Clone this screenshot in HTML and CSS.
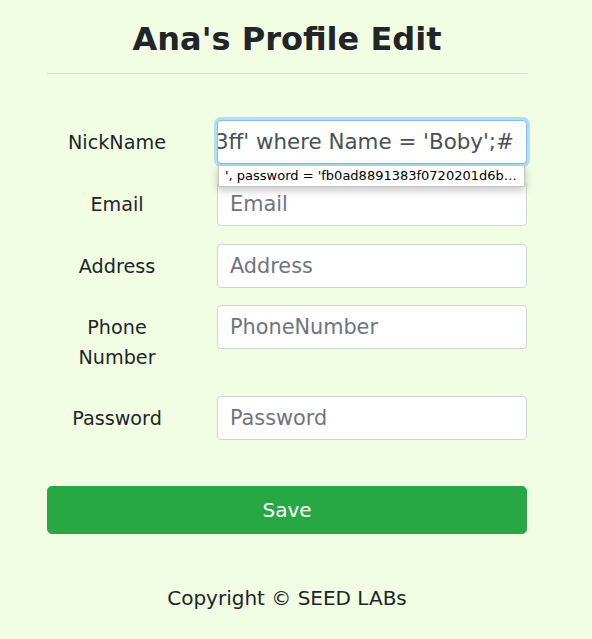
FILE: index.html
```html
<!DOCTYPE html>
<html lang="en">
<head>
<meta charset="utf-8">
<title>Ana's Profile Edit</title>
<link rel="stylesheet" href="styles.css">
</head>
<body>
<div class="container">
  <h2 class="title">Ana's Profile Edit</h2>
  <hr class="rule">
  <form class="form">
    <div class="row">
      <label class="label">NickName</label>
      <div class="field">
        <div class="input focused"><span class="value">3ff' where Name = 'Boby';#</span></div>
        <div class="suggest">', password = 'fb0ad8891383f0720201d6b4e0f8d3ff' where Name = 'Boby';#</div>
      </div>
    </div>
    <div class="row">
      <label class="label">Email</label>
      <div class="field"><div class="input"><span class="ph">Email</span></div></div>
    </div>
    <div class="row">
      <label class="label">Address</label>
      <div class="field"><div class="input"><span class="ph">Address</span></div></div>
    </div>
    <div class="row">
      <label class="label">Phone Number</label>
      <div class="field"><div class="input"><span class="ph">PhoneNumber</span></div></div>
    </div>
    <div class="row">
      <label class="label">Password</label>
      <div class="field"><div class="input"><span class="ph">Password</span></div></div>
    </div>
    <div class="save">Save</div>
  </form>
  <p class="footer">Copyright © SEED LABs</p>
</div>
</body>
</html>
```
FILE: styles.css
```css
html, body {
  margin: 0;
  padding: 0;
}
body {
  background: #f2fee4;
  font-family: "DejaVu Sans", sans-serif;
  color: #212529;
  padding-right: 18px;
}
.container {
  width: 480px;
  margin: 0 auto;
}
.title {
  margin: 0;
  padding-top: 20px;
  font-size: 32px;
  line-height: 38.4px;
  font-weight: bold;
  text-align: center;
  color: #212529;
}
.rule {
  margin: 15px 0 0 0;
  border: 0;
  border-top: 1px solid rgba(0, 0, 0, 0.1);
}
.form {
  margin-top: 46px;
}
.row {
  display: flex;
  gap: 30px;
  margin-bottom: 17.6px;
}
.label {
  width: 140px;
  flex: none;
  text-align: center;
  font-size: 19.2px;
  line-height: 30px;
  padding: 8px 0 5px;
}
.field {
  flex: 1;
  min-width: 0;
  position: relative;
}
.input {
  height: 44px;
  box-sizing: border-box;
  background: #fff;
  border: 1px solid #ced4da;
  border-radius: 4px;
  padding: 6px 12px;
  font-size: 20.8px;
  line-height: 30px;
  color: #495057;
  white-space: nowrap;
  overflow: hidden;
  display: flex;
  justify-content: flex-end;
}
.input .ph {
  color: #6c757d;
  margin-right: auto;
}
.focused {
  border-color: #80bdff;
  box-shadow: 0 0 0 3px rgba(0, 123, 255, 0.25);
}
.value {
  flex: none;
  font-size: 21.4px;
}
.suggest {
  position: absolute;
  left: 1px;
  right: 2px;
  top: 45px;
  height: 22px;
  box-sizing: border-box;
  background: #fff;
  border: 1px solid #c8c8c8;
  box-shadow: 0 3px 8px rgba(0, 0, 0, 0.25);
  font-size: 13px;
  line-height: 20px;
  color: #000;
  padding: 0 6px;
  overflow: hidden;
  white-space: nowrap;
  text-overflow: ellipsis;
  z-index: 2;
}
.save {
  margin-top: 46px;
  height: 48px;
  box-sizing: border-box;
  background: #28a745;
  border: 1px solid #28a745;
  border-radius: 4.8px;
  color: #fff;
  font-size: 20px;
  line-height: 46px;
  text-align: center;
}
.footer {
  margin: 49px 0 0 0;
  text-align: center;
  font-size: 20px;
  line-height: 30px;
}
```
